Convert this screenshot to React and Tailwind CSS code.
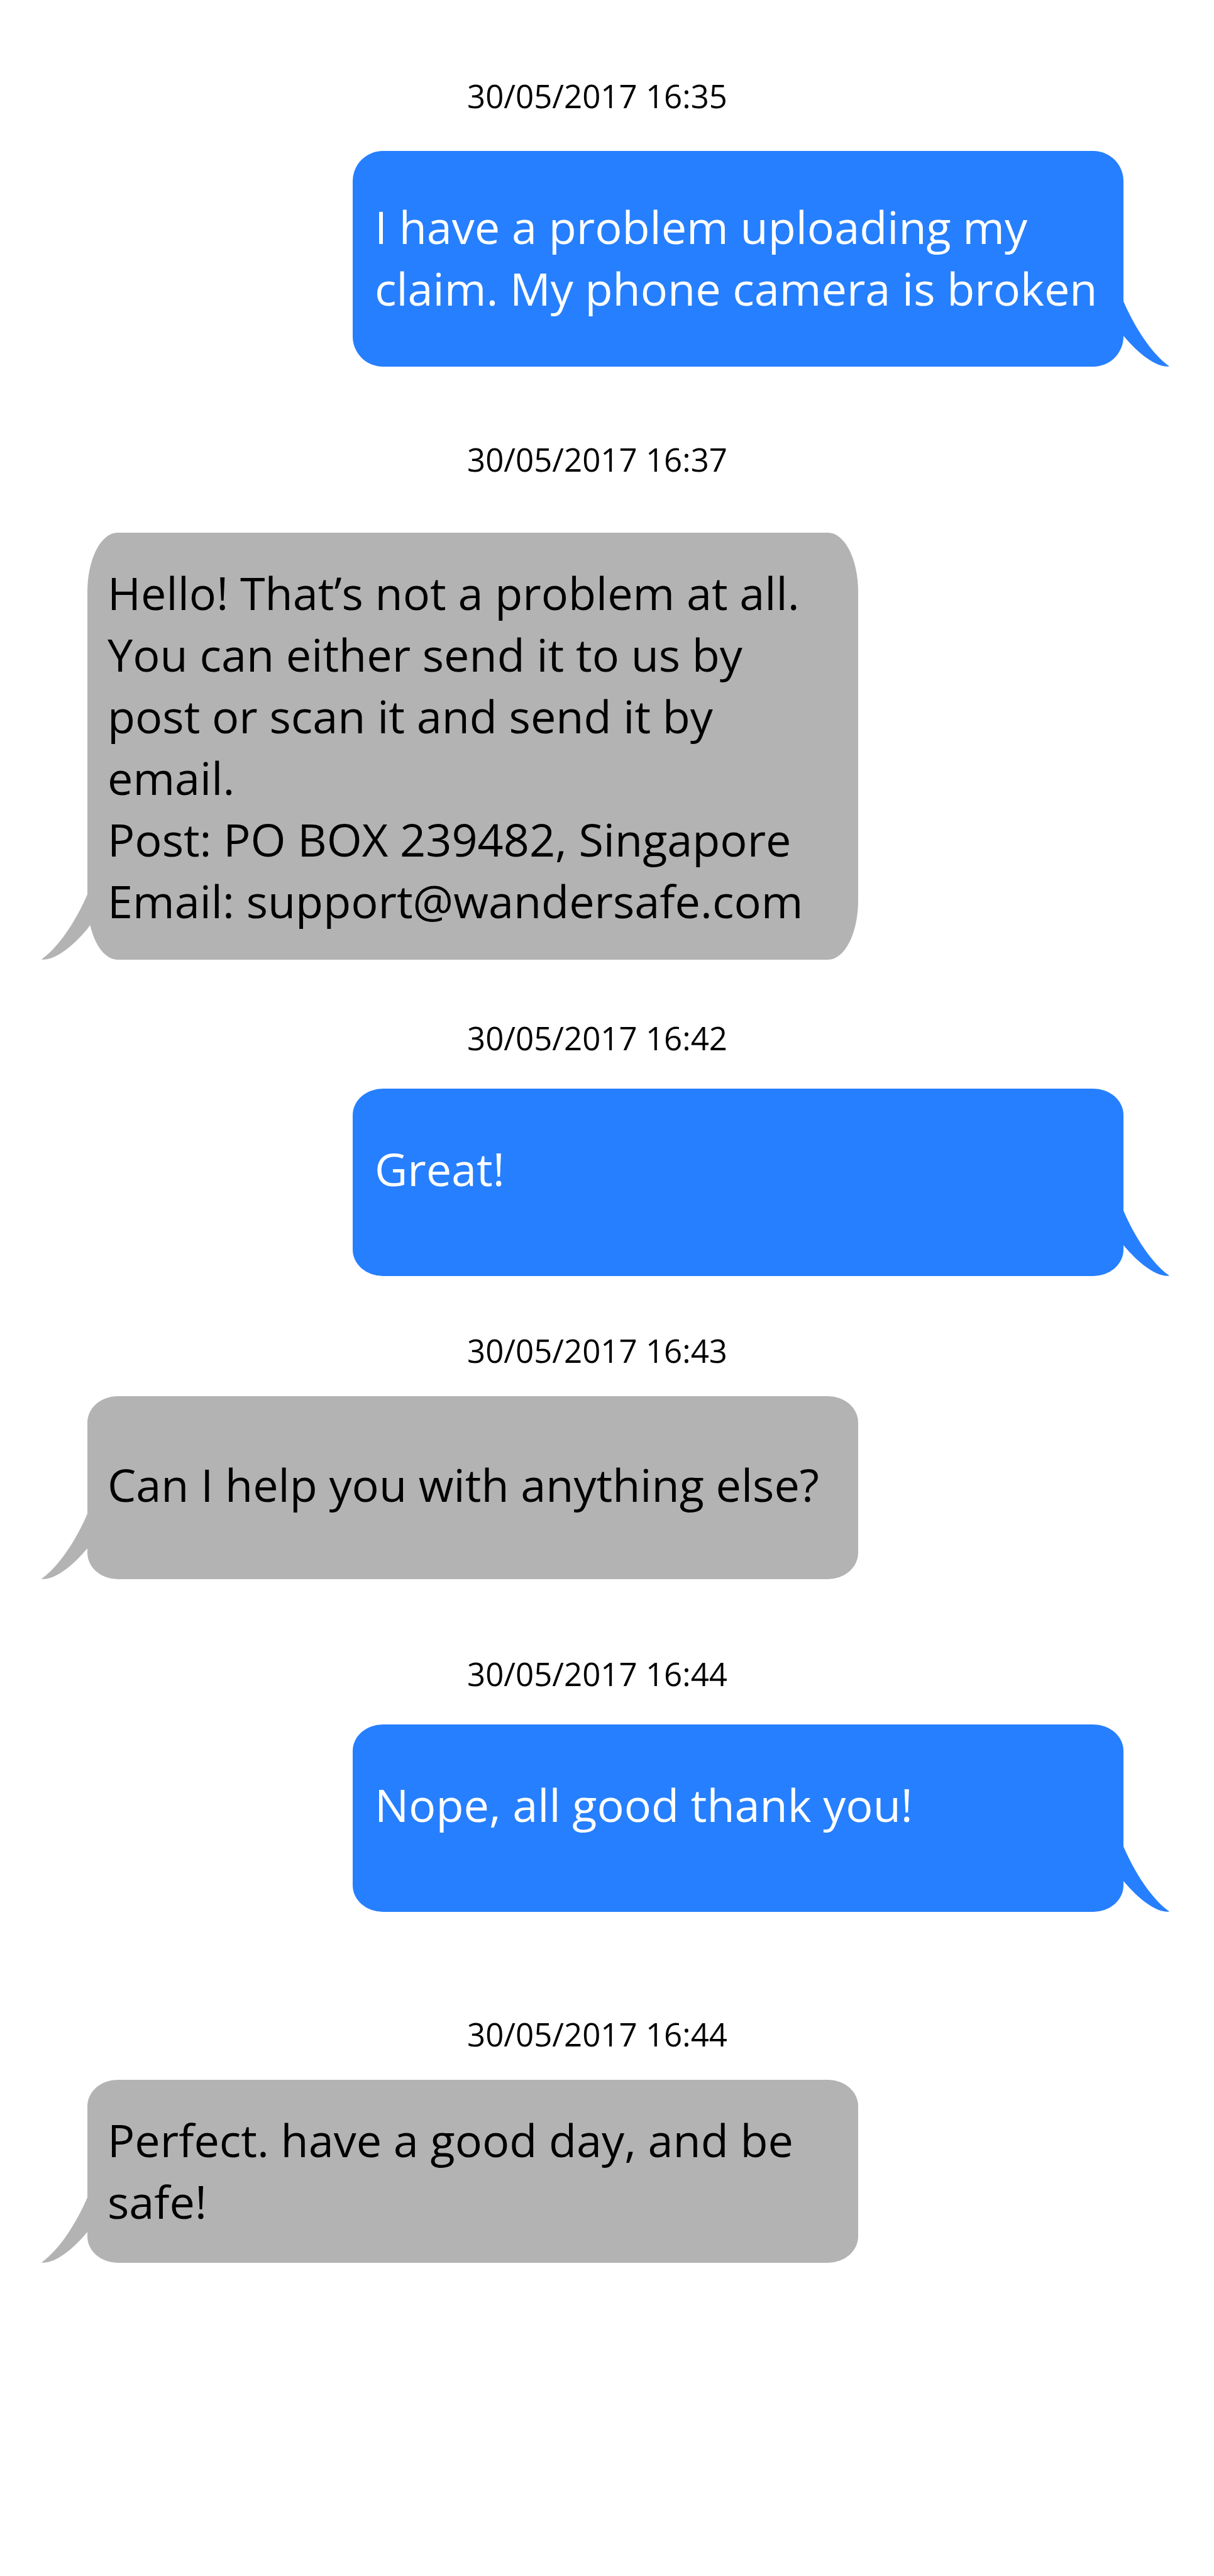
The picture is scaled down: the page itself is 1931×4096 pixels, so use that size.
const MESSAGES = [
  {
    time: "30/05/2017 16:35",
    from: "user",
    lines: ["I have a problem uploading my", "claim. My phone camera is broken"],
    row: "gap-[58px]",
    bubble: "rounded-[48px] pt-[71px] pb-[76px]",
  },
  {
    time: "30/05/2017 16:37",
    from: "agent",
    lines: [
      "Hello! That’s not a problem at all.",
      "You can either send it to us by",
      "post or scan it and send it by",
      "email.",
      "Post: PO BOX 239482, Singapore",
      "Email: support@wandersafe.com",
    ],
    row: "mt-[117px] gap-[87px]",
    bubble: "rounded-[48px/94px] pt-[46px] pb-[45px]",
  },
  {
    time: "30/05/2017 16:42",
    from: "user",
    lines: ["Great!"],
    row: "mt-[94px] gap-[51px]",
    bubble: "rounded-[48px/42px] pt-[78px] pb-[122px]",
  },
  {
    time: "30/05/2017 16:43",
    from: "agent",
    lines: ["Can I help you with anything else?"],
    row: "mt-[88px] gap-[43px]",
    bubble: "rounded-[48px/42px] pt-[91px] pb-[102px]",
  },
  {
    time: "30/05/2017 16:44",
    from: "user",
    lines: ["Nope, all good thank you!"],
    row: "mt-[120px] gap-[51px]",
    bubble: "rounded-[48px/42px] pt-[78px] pb-[122px]",
  },
  {
    time: "30/05/2017 16:44",
    from: "agent",
    lines: ["Perfect. have a good day, and be", "safe!"],
    row: "mt-[164px] gap-[43px]",
    bubble: "rounded-[48px/42px] pt-[46px] pb-[49px]",
  },
];

const SIDES = {
  user: {
    bubble: "self-end bg-[#267fff] pl-[35px] text-white",
    tail: "-right-[76px] text-[#267fff]",
  },
  agent: {
    bubble: "self-start bg-[#b3b3b3] pl-[32px] text-black",
    tail: "-left-[76px] -scale-x-100 text-[#b3b3b3]",
  },
};

function Tail({ className }) {
  return (
    <svg
      aria-hidden="true"
      viewBox="-12 0 88 104"
      className={`absolute bottom-0 h-[104px] w-[88px] ${className}`}
      fill="currentColor"
    >
      <path d="M-12 0H0C12 28 38 78 73 103.5C54 106 26 86 0 55L-12 38Z" />
    </svg>
  );
}

function Message({ time, from, lines, row, bubble }) {
  const side = SIDES[from];
  return (
    <li className={`flex flex-col ${row}`}>
      <time className="pr-[26px] text-center text-[51px] leading-[60px] text-black">{time}</time>
      <div className={`relative w-[74.4%] ${side.bubble} ${bubble}`}>
        <p className="text-[72px] leading-[98px] whitespace-nowrap">
          {lines.map((line) => (
            <span key={line} className="block">
              {line}
            </span>
          ))}
        </p>
        <Tail className={side.tail} />
      </div>
    </li>
  );
}

export default function App() {
  return (
    <main className="min-h-screen bg-white pt-[122px] pr-[144px] pl-[139px] font-['Open_Sans','Noto_Sans',sans-serif]">
      <ol className="flex flex-col">
        {MESSAGES.map((message, index) => (
          <Message key={index} {...message} />
        ))}
      </ol>
    </main>
  );
}
